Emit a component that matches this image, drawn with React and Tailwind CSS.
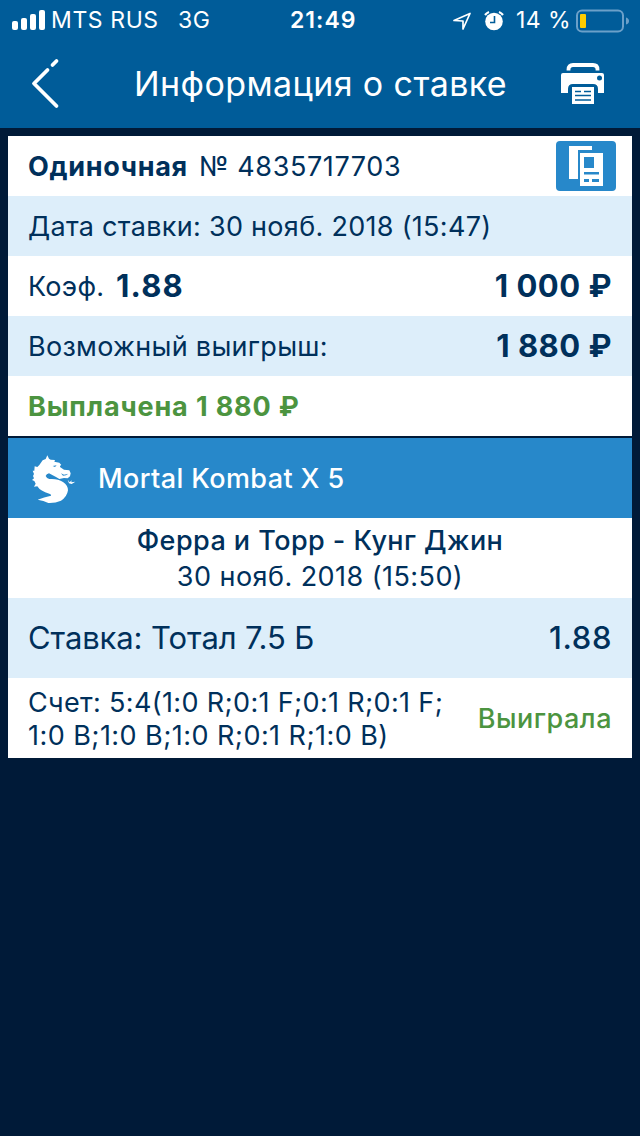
const bet = {
  type: 'Одиночная',
  number: '№ 4835717703',
  date: 'Дата ставки: 30 нояб. 2018 (15:47)',
  odds: '1.88',
  stake: '1 000 ₽',
  win: '1 880 ₽',
};

const bars = ['h-[9px]', 'h-[12px]', 'h-[16px]', 'h-[20px]'];

const DragonIcon = () => (
  <svg width="70" height="65" viewBox="0 0 210 195" fill="#fff">
    <path d="M58 57L68 43L77 39L82 28L87 38L92 41L105 42L103 47L118 50L124 57Q119 59 120 63L132 71L148 73L152 82L150 91L143 97L132 96L118 99L108 93Q96 87 87 82Q79 84 77 90Q80 97 88 99Q113 97 129 108Q144 118 144 133Q141 153 123 164Q105 172 85 171L70 165L53 161Q72 154 93 149Q96 146 88 143Q61 136 52 121L42 122L47 113L43 105L36 102L42 97L39 90L42 84L38 74L43 74L44 61L52 63Z" />
    <path d="M98 60L110 58L105 63ZM123 82L132 86L145 83L138 88L129 89Z" fill="#2788ca" />
    <path d="M143 101L149 109L155 103L154 109L166 107L155 114L147 112Z" />
  </svg>
);

const PrinterIcon = () => (
  <svg width="46" height="44" viewBox="0 0 46 44">
    <path d="M8.500 8.500v-1q0-4.500 4.500-4.500h20q4.500 0 4.500 4.500v1" fill="none" stroke="#fff" strokeWidth="3.800" />
    <path d="M3 11h39q2 0 2 2v18h-6v-4q0-5-5-5H13q-5 0-5 5v4H1V13q0-2 2-2Z" fill="#fff" />
    <circle cx="39.500" cy="16" r="2.500" fill="#005c99" />
    <path d="M12 25h22v17H12Z" fill="#fff" />
    <path d="M15 29.500h6M24 29.500h7M15 33.500h16M15 38h16" stroke="#005c99" strokeWidth="1.600" />
  </svg>
);

const App = () => (
  <div className="min-h-[1136px] w-[640px] bg-[#001a38] font-['Inter',sans-serif] text-[#00305b]">
    <header className="h-32 bg-[#005c99] text-white">
      <div className="flex h-10 items-center pt-px pr-2 pl-3 text-[23px] leading-[39px] whitespace-pre">
        <div className="mb-px flex h-5 w-[33px] items-end gap-[3px]">
          {bars.map((h) => (
            <div key={h} className={`w-[6px] rounded-[2px] bg-white ${h}`} />
          ))}
        </div>
        <span className="ml-[6px] w-[127px] tracking-[0.6px]">MTS RUS</span>
        <span className="w-[112px] tracking-[0.6px]">3G</span>
        <span className="w-[162px] font-semibold tracking-[1px]">21:49</span>
        <svg width="20" height="20" viewBox="0 0 20 20" className="shrink-0">
          <path d="M2 9.500 18 2.500 11 18V10Z" fill="none" stroke="#fff" strokeWidth="1.700" strokeLinejoin="round" />
        </svg>
        <svg width="22" height="22" viewBox="0 0 22 22" className="ml-[11px] shrink-0">
          <circle cx="11" cy="11.500" r="8.800" fill="#fff" />
          <path d="M2 5A10 10 0 0 1 6 2M16 2a10 10 0 0 1 4 3" fill="none" stroke="#fff" strokeWidth="2.200" />
          <path d="M11.500 6v6.500H7" fill="none" stroke="#005c99" strokeWidth="1.600" />
        </svg>
        <span className="ml-[11px] w-[60px] tracking-[0.4px]">14 %</span>
        <svg width="54" height="24" viewBox="0 0 54 24" className="shrink-0">
          <rect x="1" y="1.500" width="46" height="21" rx="5" fill="none" stroke="#6ba0c9" strokeWidth="2" />
          <rect x="4" y="5" width="6" height="14" rx="1" fill="#ffcc00" />
          <path d="M50 8.500q3 1 3 3.500t-3 3.500Z" fill="#6ba0c9" />
        </svg>
      </div>
      <div className="flex h-[88px] items-center pr-[34px] pl-[30px]">
        <svg width="32" height="52" viewBox="0 0 32 52" className="mb-[2px] shrink-0">
          <path d="M26.500 4 22.500 8M17.500 13 4 26.500 26.500 49" fill="none" stroke="#fff" strokeWidth="3.800" strokeLinecap="round" strokeLinejoin="round" />
        </svg>
        <h1 className="mb-[2px] ml-[72px] flex-1 text-[34px] tracking-[0.4px] whitespace-nowrap">Информация о ставке</h1>
        <PrinterIcon />
      </div>
    </header>

    <main className="px-2 pt-2">
      <section className="bg-white text-[27px] tracking-[0.3px]">
        <div className="flex h-[60px] items-center pr-4 pl-5">
          <b className="w-[171px] pt-0.5 font-bold tracking-[0.7px]">{bet.type}</b>
          <span className="flex-1 pt-0.5 tracking-[0.6px]">{bet.number}</span>
          <svg width="60" height="50" viewBox="0 0 60 50">
            <rect width="60" height="50" rx="4" fill="#2788ca" />
            <path d="M13 5h23v4H22v29h-9Z" fill="#fff" />
            <path d="M24 12h23v33H24Z" fill="#fff" />
            <path d="M28 16h10v11H28ZM28 31h15v2.500H28ZM28 38h5v3h-5ZM36 38h7v3h-7Z" fill="#2788ca" />
          </svg>
        </div>
        <div className="flex h-[60px] items-center bg-[#ddeefa] px-5 pt-0.5">{bet.date}</div>
        <div className="flex h-[60px] items-center px-5">
          <span className="w-[88px] pt-0.5">Коэф.</span>
          <b className="flex-1 pt-px text-[31px] font-bold tracking-[1.2px]">{bet.odds}</b>
          <b className="pt-px text-[31px] font-bold tracking-[0.5px]">{bet.stake}</b>
        </div>
        <div className="flex h-[60px] items-center justify-between bg-[#ddeefa] px-5">
          <span className="pt-0.5">Возможный выигрыш:</span>
          <b className="pt-px text-[31px] font-bold tracking-[0.5px]">{bet.win}</b>
        </div>
        <div className="flex h-[60px] items-center px-5 pt-0.5 font-bold tracking-[0.85px] text-[#4c9440]">Выплачена {bet.win}</div>
      </section>

      <section className="mt-[2px] bg-white">
        <div className="flex h-20 items-center bg-[#2788ca] pl-3 text-[27px] font-medium tracking-[0.4px] text-white">
          <DragonIcon />
          <span className="ml-2 pt-0.5">Mortal Kombat X 5</span>
        </div>
        <div className="h-20 pt-[5px] text-center text-[27px] leading-9">
          <div className="font-medium tracking-[0.45px]">Ферра и Торр - Кунг Джин</div>
          <div className="tracking-[0.45px]">30 нояб. 2018 (15:50)</div>
        </div>
        <div className="flex h-20 items-center justify-between bg-[#ddeefa] px-5 text-[31px]">
          <span className="tracking-[-0.1px]">Ставка: Тотал 7.5 Б</span>
          <span className="font-medium tracking-[0.6px]">1.88</span>
        </div>
        <div className="flex h-20 items-center justify-between px-5 text-[27px]">
          <p className="pt-px leading-[33px] whitespace-nowrap">
            <span className="tracking-[0.35px]">Счет: 5:4(1:0 R;0:1 F;0:1 R;0:1 F;</span>
            <br />
            <span className="tracking-[0.45px]">1:0 B;1:0 B;1:0 R;0:1 R;1:0 B)</span>
          </p>
          <span className="pt-0.5 font-medium tracking-[0.5px] text-[#4c9440]">Выиграла</span>
        </div>
      </section>
    </main>
  </div>
);

export default App;
